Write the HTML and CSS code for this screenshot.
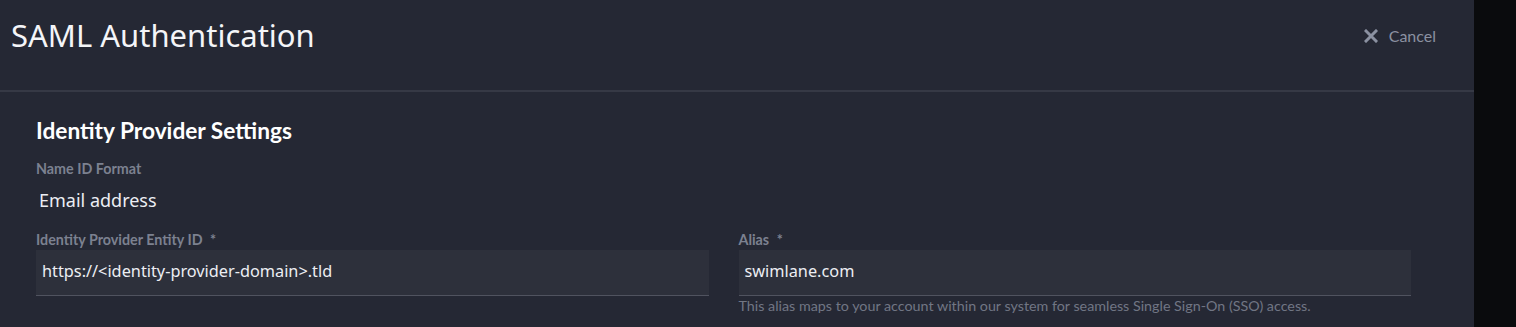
FILE: index.html
```html
<!DOCTYPE html>
<html lang="en">
<head>
    <meta charset="UTF-8">
    <title>SAML Authentication</title>
    <link rel="stylesheet" href="styles.css">
</head>
<body>
    <div class="screen">
        <div class="panel">
            <div class="header">
                <h1 class="title">SAML Authentication</h1>
                <button class="cancel">
                    <svg width="14" height="14" viewBox="0 0 14 14">
                        <path d="M2 2 L12 12 M12 2 L2 12" stroke="#8b91a1" stroke-width="3" stroke-linecap="square"/>
                    </svg>
                    <span>Cancel</span>
                </button>
            </div>

            <div class="section">
                <h2 class="section-title">Identity Provider Settings</h2>

                <div class="field">
                    <div class="label">Name ID Format</div>
                    <div class="static-value">Email address</div>
                </div>

                <div class="row">
                    <div class="field">
                        <div class="label">Identity Provider Entity ID <span class="req">*</span></div>
                        <div class="input">https://&lt;identity-provider-domain&gt;.tld</div>
                    </div>
                    <div class="field">
                        <div class="label">Alias <span class="req">*</span></div>
                        <div class="input">swimlane.com</div>
                        <div class="help">This alias maps to your account within our system for seamless Single Sign-On (SSO) access.</div>
                    </div>
                </div>
            </div>
        </div>
        <div class="backdrop"></div>
    </div>
</body>
</html>
```

FILE: styles.css
```css
* {
    margin: 0;
    padding: 0;
    box-sizing: border-box;
}
body {
    background: #0a0b0d;
    font-family: "Noto Sans", sans-serif;
    height: 327px;
    overflow: hidden;
}
.screen {
    display: flex;
    height: 327px;
}
.panel {
    width: 1474px;
    background: #252834;
    height: 100%;
}
.backdrop {
    flex: 1;
    background: #0a0b0d;
}
.header {
    height: 92px;
    display: flex;
    align-items: flex-start;
    justify-content: space-between;
    border-bottom: 2px solid #363945;
    padding: 13px 38px 0 11px;
}
.title {
    font-weight: 400;
    font-size: 31px;
    line-height: 44px;
    color: #f4f5f8;
}
.cancel {
    background: none;
    border: none;
    display: flex;
    align-items: center;
    gap: 11px;
    margin-top: 13px;
    font-family: "Lato", sans-serif;
    font-size: 16px;
    color: #8b91a1;
}
.cancel svg {
    margin-left: -2px;
}
.section {
    padding: 27px 63px 0 36px;
}
.section-title {
    font-family: "Lato", sans-serif;
    font-weight: 700;
    font-size: 22.7px;
    line-height: 24px;
    color: #ffffff;
    margin-bottom: 18px;
}
.label {
    font-family: "Lato", sans-serif;
    font-weight: 700;
    font-size: 14.3px;
    line-height: 16px;
    color: #7c8190;
}
.req {
    margin-left: 4px;
}
.static-value {
    font-size: 18px;
    line-height: 24px;
    color: #eceef3;
    padding: 11px 0 0 3px;
    height: 55px;
}
.row {
    display: grid;
    grid-template-columns: 1fr 1fr;
    column-gap: 30px;
}
.input {
    margin-top: 2px;
    height: 46px;
    background: #2d303b;
    border-bottom: 1px solid #50535f;
    padding: 0 6px 3px;
    display: flex;
    align-items: center;
    font-size: 16.3px;
    color: #eceef3;
}
.help {
    font-family: "Lato", sans-serif;
    font-size: 14.3px;
    line-height: 20px;
    color: #717684;
}
```
